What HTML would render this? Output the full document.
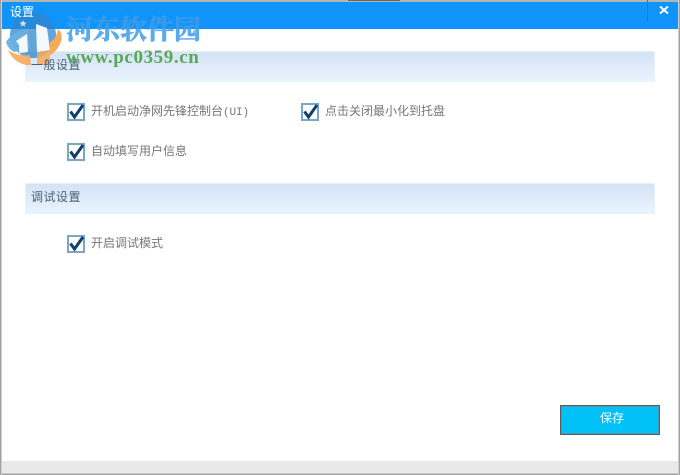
<!DOCTYPE html>
<html lang="zh">
<head>
<meta charset="utf-8">
<title>设置</title>
<style>
html,body{margin:0;padding:0;width:680px;height:475px;overflow:hidden;background:#fff}
body{position:relative;font-family:"Liberation Sans","WenQuanYi Zen Hei","Noto Sans CJK SC",sans-serif;font-size:12px;color:#777}
div,span,svg{position:absolute}
.t{white-space:nowrap;line-height:16px;font-size:12px}
.m{position:static;font-family:"Liberation Mono",monospace;font-size:11px;letter-spacing:-.1px}
.bar{left:25px;width:630px;height:31px;background:linear-gradient(#d3e2f5,#e9f4fd);box-shadow:inset 0 0 0 1px #e6f1fb}
.cb{width:18px;height:18px}
</style>
</head>
<body>
<div style="left:0;top:2px;width:680px;height:27px;background:#1094fa"></div>
<div style="left:0;top:0;width:680px;height:2px;background:#b5b5b5"></div>
<div style="left:348px;top:0;width:52px;height:1px;background:#666"></div>
<div style="left:2px;top:461px;width:676px;height:12px;background:#e9e9e9"></div>
<div style="left:0;top:473px;width:680px;height:1px;background:#c8c8c8"></div>
<div style="left:0;top:474px;width:680px;height:1px;background:#a0a0a0"></div>
<div style="left:647px;top:0;width:1px;height:21px;background:#3f74a8"></div>

<div class="bar" style="top:51px"></div>
<div class="bar" style="top:183px"></div>

<svg style="left:0;top:0" width="70" height="70" viewBox="0 0 70 70">
<circle cx="33" cy="35" r="23" fill="#2f86cc" opacity=".75"/>
<path d="M6 42C10 35 18 31 28 29L30 48L14 52C10 50 7 46 6 42Z" fill="#6cb0e3" opacity=".95"/>
<path d="M8 50C12 60 22 66 31 65L30 55C20 56 14 54 8 50Z" fill="#f7ab5a" opacity=".9"/>
<path d="M37 52L50 50L50 65L37 65Z" fill="#f7ab5a" opacity=".85"/>
<path d="M58 29C62 32 63 38 60 44C57 50 53 54 50 55L50 42C54 40 57 36 58 29Z" fill="#f7ab5a"/>
<path d="M16 41L27 34L28 52L19 53L19 45Z" fill="#f5f9fd"/>
<path d="M36 24L47 28L50 50L37 52Z" fill="#f5f9fd"/>
<path d="M23 20l1 2.400 2.600.2-2 1.600.7 2.500-2.300-1.400-2.300 1.400.7-2.500-2-1.600 2.600-.2z" fill="#cfe6f8"/>
</svg>

<div style="left:0;top:0;width:1px;height:475px;background:#a0a0a0"></div>
<div style="left:1px;top:0;width:1px;height:475px;background:#d0d0d0"></div>
<div style="left:679px;top:0;width:1px;height:475px;background:#a0a0a0"></div>
<div style="left:678px;top:0;width:1px;height:475px;background:#d0d0d0"></div>
<svg style="left:659px;top:6px" width="10" height="8" viewBox="0 0 10 8"><path d="M1 .5L9 7.500M9 .5L1 7.500" stroke="#fff" stroke-width="2" fill="none"/></svg>
<div class="t" style="left:10px;top:4px;color:#fff">设置</div>

<div class="t" style="left:31px;top:57px;color:#4a5f78;letter-spacing:.5px">一般设置</div>
<div class="t" style="left:31px;top:189px;color:#4a5f78;letter-spacing:.5px">调试设置</div>

<svg class="cb" style="left:67px;top:103px" viewBox="0 0 18 18"><rect x="1" y="1" width="16" height="16" fill="#fff" stroke="#7ba6c8" stroke-width="2"/><path d="M3.500 8.500L7.500 14L16 2" fill="none" stroke="#123f6c" stroke-width="3"/></svg>
<div class="t" style="left:91px;top:103px">开机启动净网先锋控制台<span class="m">(UI)</span></div>
<svg class="cb" style="left:301px;top:103px" viewBox="0 0 18 18"><rect x="1" y="1" width="16" height="16" fill="#fff" stroke="#7ba6c8" stroke-width="2"/><path d="M3.500 8.500L7.500 14L16 2" fill="none" stroke="#123f6c" stroke-width="3"/></svg>
<div class="t" style="left:325px;top:103px">点击关闭最小化到托盘</div>
<svg class="cb" style="left:67px;top:143px" viewBox="0 0 18 18"><rect x="1" y="1" width="16" height="16" fill="#fff" stroke="#7ba6c8" stroke-width="2"/><path d="M3.500 8.500L7.500 14L16 2" fill="none" stroke="#123f6c" stroke-width="3"/></svg>
<div class="t" style="left:91px;top:143px">自动填写用户信息</div>
<svg class="cb" style="left:67px;top:235px" viewBox="0 0 18 18"><rect x="1" y="1" width="16" height="16" fill="#fff" stroke="#7ba6c8" stroke-width="2"/><path d="M3.500 8.500L7.500 14L16 2" fill="none" stroke="#123f6c" stroke-width="3"/></svg>
<div class="t" style="left:91px;top:235px">开启调试模式</div>

<div style="left:560px;top:405px;width:98px;height:28px;border:1px solid #5c5c5c;background:#00c0f5;box-shadow:inset 0 0 0 1px #4a9ab5"></div>
<div class="t" style="left:600px;top:410px;color:#fff">保存</div>

<div class="t" style="left:66px;top:14px;font-family:'Liberation Serif','Noto Serif CJK SC',serif;font-weight:bold;font-size:27px;line-height:32px;color:#3f9ce8;opacity:.85;-webkit-text-stroke:.7px #3f9ce8">河东软件园</div>
<div class="t" style="left:66px;top:48px;font-family:'Liberation Serif',serif;font-weight:bold;font-size:19px;line-height:20px;color:#5aa85a;letter-spacing:.6px">www.pc0359.cn</div>
</body>
</html>
